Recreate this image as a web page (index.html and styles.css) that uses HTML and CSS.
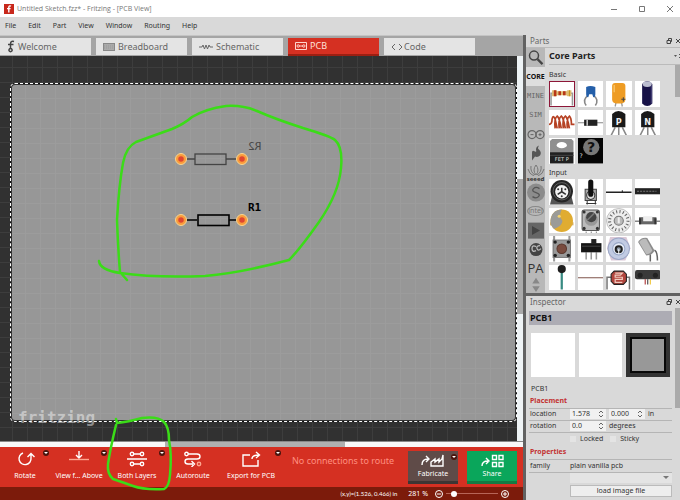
FILE: index.html
```html
<!DOCTYPE html>
<html lang="en">
<head>
    <meta charset="UTF-8">
    <meta name="viewport" content="width=device-width, initial-scale=1.0">
    <link rel="stylesheet" href="styles.css">
    <title>Untitled Sketch.fzz* - Fritzing - [PCB View]</title>
</head>
<body>
    <header class="titlebar">
        <svg class="logo" viewBox="0 0 10 10"><rect width="10" height="10" fill="#c8281c"/><path d="M7 2.2Q4.8 1.2 4.8 3.5V8.6M3 4.6H6.6" fill="none" stroke="#fff" stroke-width="1.4"/></svg>
        <span class="title">Untitled Sketch.fzz* - Fritzing - [PCB View]</span>
        <div class="window-buttons">
            <button aria-label="Minimize"><svg viewBox="0 0 8 8"><path d="M1 4.5H7"/></svg></button>
            <button aria-label="Maximize"><svg viewBox="0 0 8 8"><path d="M1.5 1.5H6.5V6.5H1.5Z"/></svg></button>
            <button aria-label="Close"><svg viewBox="0 0 8 8"><path d="M1 1L7 7M7 1L1 7"/></svg></button>
        </div>
    </header>

    <nav class="menu">
        <button>File</button>
        <button>Edit</button>
        <button>Part</button>
        <button>View</button>
        <button>Window</button>
        <button>Routing</button>
        <button>Help</button>
    </nav>

    <div class="workspace">
        <main class="editor">
            <div class="tabs">
                <button class="tab"><svg width="8" height="13" viewBox="0 0 8 13"><path d="M7 1.5Q3.5 .5 3.5 4V9M1 4.5H6.5M3.5 8.5A1.6 1.6 0 1 0 3.6 8.5" fill="none" stroke="#444" stroke-width="1.5"/></svg>Welcome</button>
                <button class="tab"><svg width="12" height="8" viewBox="0 0 12 8"><rect x=".5" y=".5" width="11" height="7" fill="#aaa" stroke="#888"/><path d="M1 3H11M1 5H11" stroke="#999" stroke-dasharray="1 1"/></svg>Breadboard</button>
                <button class="tab"><svg width="14" height="8" viewBox="0 0 14 8"><path d="M0 4H3L4 2L5.5 6L7 2L8.5 6L10 2L11 4H14" fill="none" stroke="#666"/></svg>Schematic</button>
                <button class="tab tab-on"><svg width="12" height="8" viewBox="0 0 12 8"><path d="M.5 .5H11.5V7.5H.5ZM4 4H8" fill="none" stroke="#ffd5cd"/><circle cx="3.2" cy="4" r="1.2" fill="none" stroke="#ffd5cd"/><circle cx="8.8" cy="4" r="1.2" fill="none" stroke="#ffd5cd"/></svg>PCB</button>
                <button class="tab tab-code"><svg width="12" height="8" viewBox="0 0 12 8"><path d="M4 1L1 4L4 7M8 1L11 4L8 7" fill="none" stroke="#666"/></svg>Code</button>
            </div>

            <div class="view">
                <div class="canvas">
                    <div class="board"></div>
                    <span class="watermark">fritzing</span>
                    <svg class="parts-layer" width="517" height="385" viewBox="0 56 517 385">
                        <g fill="none" stroke="#444" stroke-width="1.3">
                            <path d="M181 159H195M226 159H242"/><rect x="195" y="154" width="31" height="10.500"/>
                        </g>
                        <g fill="none" stroke="#000" stroke-width="1.6">
                            <path d="M181 220H197M229 220H242"/><rect x="198" y="215" width="31" height="10.500"/>
                        </g>
                        <g fill="#df4630" stroke="#fa9c3c" stroke-width="2.500">
                            <circle cx="181" cy="159" r="4"/><circle cx="242" cy="159" r="4"/>
                            <circle cx="181" cy="220" r="4"/><circle cx="242" cy="220" r="4"/>
                        </g>
                        <g fill="none" stroke="#ffd68a">
                            <circle cx="181" cy="159" r="5.500"/><circle cx="242" cy="159" r="5.500"/>
                            <circle cx="181" cy="220" r="5.500"/><circle cx="242" cy="220" r="5.500"/>
                        </g>
                        <path class="pen" d="M99 261Q100 270 120 273Q155 278 205 276Q240 273 289 260Q300 249 319 222Q339 193 341 168Q343 147 335 140Q330 136 303 128Q275 119 257 111Q243 105 226 106Q205 109 192 117Q184 124 172 129L136 142Q126 147 123 163Q119 185 117 220Q118 248 120 272L127 280"/>
                    </svg>
                    <span class="ref ref-bottom">R2</span>
                    <span class="ref ref-top">R1</span>
                </div>
                <div class="vscroll"><div class="vthumb"></div></div>
            </div>
            <div class="hscroll"><div class="hthumb"></div></div>

            <div class="toolbar">
                <button class="tool tool-rotate">
                    <svg viewBox="0 0 22 16"><path d="M9 2A6 6 0 1 0 17 7V3M13.500 6L17 2.500L20.500 6" /></svg>
                    Rotate<i class="drop"></i>
                </button>
                <button class="tool tool-wide">
                    <svg viewBox="0 0 22 16"><path d="M11 0V6M8 4L11 7L14 4"/><path d="M1 8.500H21" stroke="#ffa58e"/></svg>
                    View f... Above<i class="drop"></i>
                </button>
                <button class="tool tool-wide">
                    <svg viewBox="0 0 22 16"><path d="M1 8H21M7 3H15M7 13H15"/><circle cx="6" cy="3" r="1.700"/><circle cx="16" cy="3" r="1.700"/><circle cx="6" cy="13" r="1.700"/><circle cx="16" cy="13" r="1.700"/></svg>
                    Both Layers<i class="drop"></i>
                </button>
                <button class="tool tool-auto">
                    <svg viewBox="0 0 22 16"><circle cx="4.500" cy="3" r="1.700"/><path d="M6 3H15Q18 3 18 5.500T15 8H6Q3 8 3 10.500T6 13H11M9.500 10L12.500 13L9.500 16"/><circle cx="17" cy="13" r="1.700" stroke="#ffa58e"/></svg>
                    Autoroute
                </button>
                <button class="tool tool-export">
                    <svg viewBox="0 0 22 16"><path d="M10 4H3V15H18V9M12 8Q12 4 19 4M16 1L19.500 4L16 7"/></svg>
                    Export for PCB<i class="drop"></i>
                </button>
                <span class="routing">No connections to route</span>
                <button class="big fabricate">
                    <svg width="26" height="14" viewBox="0 0 26 14"><path d="M2 11Q2 5 8 5M6 2L9 5L6 8M11 12V8L15 5V8L19 5V8L22 5L23 1V12Z"/></svg>
                    Fabricate<i class="drop"></i>
                </button>
                <button class="big share">
                    <svg width="26" height="14" viewBox="0 0 26 14"><path d="M3 12Q3 7 9 7M7 4L10 7L7 10M13.500 1.500H17.500V5.500H13.500ZM20 1.500H24V5.500H20ZM13.500 8.500H17.500V12.500H13.500ZM20 8.500H24V12.500H20Z"/></svg>
                    Share
                </button>
            </div>
            <div class="status">
                <span class="coords">(x,y)=(1.526, 0.466) in</span>
                <span class="percent">281 %</span>
                <button aria-label="Zoom out"><svg viewBox="0 0 10 10"><circle cx="5" cy="5" r="3.500"/><path d="M3 5H7"/></svg></button>
                <input class="zoom" type="range" min="0" max="100" value="10" aria-label="Zoom">
                <button aria-label="Zoom in"><svg viewBox="0 0 10 10"><circle cx="5" cy="5" r="3.500"/><path d="M3 5H7M5 3V7"/></svg></button>
            </div>
            <svg class="pen-layer" width="80" height="90" viewBox="100 410 80 90"><path class="pen" d="M116 419L117 423Q128 422 142 418Q158 416 164 422Q169 427 169 440Q172 455 170 475Q169 487 164 489Q144 490 133 486Q125 483 113 479Q107 474 108 464Q110 450 116 425"/></svg>
        </main>

        <aside class="side">
            <section class="parts">
                <div class="dock-head"><span>Parts</span><svg viewBox="0 0 14 6"><path d="M1 2.500H4.500V5.500H1ZM2.500 2V.5H5.500V3.500H5M10 1L14 5M14 1L10 5"/></svg></div>
                <div class="parts-body">
                    <div class="bins">
                        <button class="bin" aria-label="Search"><svg viewBox="0 0 18 18"><circle cx="7" cy="7" r="4.500" fill="none" stroke="#444" stroke-width="1.500"/><path d="M10.500 10.500L15.500 15.500" stroke="#444" stroke-width="2.200"/></svg></button>
                        <button class="bin bin-on">CORE</button>
                        <button class="bin bin-mono">MINE</button>
                        <button class="bin bin-mono">SIM</button>
                        <button class="bin" aria-label="Arduino"><svg viewBox="0 0 18 18"><circle cx="5" cy="9" r="4" fill="none" stroke="#666" stroke-width="1.200"/><circle cx="13" cy="9" r="4" fill="none" stroke="#666" stroke-width="1.200"/><path d="M3.500 9H6.500M11.500 9H14.500M13 7.500V10.500" stroke="#666"/></svg></button>
                        <button class="bin" aria-label="SparkFun"><svg viewBox="0 0 18 18"><path d="M5 16V8Q5 5 8 7Q10 8 9 5Q9 2 12 1Q10 4 12 5Q15 8 13 11Q11 13 8 12Z" fill="#555"/></svg></button>
                        <button class="bin bin-seeed"><svg viewBox="0 0 18 12"><path d="M9 1Q5 6 9 11Q13 6 9 1M4 2Q3 8 8 11M14 2Q15 8 10 11M1 5Q2 10 7 12M17 5Q16 10 11 12" fill="none" stroke="#777"/></svg>seeed</button>
                        <button class="bin" aria-label="Snootlab"><svg viewBox="0 0 18 18"><circle cx="9" cy="9" r="9" fill="#8c8c8c"/><path d="M12.500 5Q9 2.500 6.500 5T9 9T11.500 13T5.500 13" fill="none" stroke="#555" stroke-width="1.300"/></svg></button>
                        <button class="bin bin-intel"><span>intel</span></button>
                        <button class="bin" aria-label="Play"><svg viewBox="0 0 18 18"><rect x="1" y="1" width="16" height="16" fill="#666"/><path d="M5 4.500L13 9L5 13.500Z" fill="#444"/></svg></button>
                        <button class="bin" aria-label="Monster"><svg viewBox="0 0 18 18"><circle cx="9" cy="9" r="6.500" fill="#444"/><path d="M9 6Q5 4 5 8T9 10M13 5Q9 5 10 8T14 8" stroke="#bbb" stroke-width="1.300" fill="none"/></svg></button>
                        <button class="bin bin-pa">PA</button>
                        <button class="bin" aria-label="Scroll bins"><svg viewBox="0 0 18 18"><path d="M5 8L9 2L13 8ZM5 11L9 17L13 11Z" fill="#888"/></svg></button>
                    </div>
                    <div class="bin-view">
                        <div class="bin-title"><h2>Core Parts</h2><svg viewBox="0 0 6 8"><path d="M0 3H3L1.500 5ZM5 2H6V3H5ZM5 5H6V6H5Z" fill="#555"/></svg></div>
                        <div class="bin-scroll">
                            <h3>Basic</h3>
                            <div class="grid grid-basic">
                                <button class="part part-on" aria-label="Resistor"><svg viewBox="0 0 25 25"><path d="M2 24V12H23V24" fill="none" stroke="#999" stroke-width="1.500"/><path d="M3 9H7L8 10H17L18 9H22V15H18L17 14H8L7 15H3Z" fill="#dfbd74"/><path d="M6 9V15M10.500 10V14" stroke="#b73518" stroke-width="2.500"/><path d="M15 10V14" stroke="#b73518" stroke-width="2.500"/><path d="M20 9V15" stroke="#c59119"/></svg></button>
                                <button class="part" aria-label="Ceramic Capacitor"><svg viewBox="0 0 25 25"><path d="M10 14Q4 18 8 24M15 14Q21 18 17 24" fill="none" stroke="#888" stroke-width="1.500"/><path d="M8 6Q12 4 17 6V13Q17 16 15 16L14 13H11L10 16Q8 16 8 13Z" fill="#245fa9"/></svg></button>
                                <button class="part" aria-label="Tantalum Capacitor"><svg viewBox="0 0 25 25"><path d="M10 20L9 25M15 20L16 25" stroke="#999" stroke-width="1.300"/><path d="M6 5Q6 2 9 2H16Q19 2 19 5V18Q19 22 15 22H10Q6 22 6 18Z" fill="#ee9c24"/><path d="M8 4V11" stroke="#ffd27e"/><path d="M15 18H19M17 16V20" stroke="#444"/></svg></button>
                                <button class="part" aria-label="Electrolytic Capacitor"><svg viewBox="0 0 25 25"><path d="M7 3Q12 -3 17 3V22Q12 27 7 22Z" fill="#171247"/><ellipse cx="12" cy="3" rx="4.500" ry="2.800" fill="#bbbdd0"/><path d="M16 5V22" stroke="#4b477d"/></svg></button>
                                <button class="part" aria-label="Inductor"><svg viewBox="0 0 25 25"><path d="M0 14Q3 14 3 9Q4 4 6 9L8 18M6 18Q5 8 8 6Q10 7 12 18M10 18Q9 8 12 6Q14 7 16 18M14 18Q13 8 16 6Q18 7 20 18M18 18Q17 8 20 6Q22 8 22 14H25" fill="none" stroke="#b64224" stroke-width="1.700"/></svg></button>
                                <button class="part" aria-label="Diode"><svg viewBox="0 0 25 25"><path d="M0 12.500H25" stroke="#888"/><rect x="6" y="9.500" width="13" height="6" fill="#222"/><path d="M9 9.500V15.500" stroke="#ccc" stroke-width="1.500"/></svg></button>
                                <button class="part" aria-label="PNP Transistor"><svg viewBox="0 0 25 25"><path d="M9 17L5 25M12.500 17V25M16 17L20 25" stroke="#888" stroke-width="1.500"/><path d="M6 4Q12 -2 19 4V17H6Z" fill="#191919"/><text x="12.500" y="15" class="letter">P</text></svg></button>
                                <button class="part" aria-label="NPN Transistor"><svg viewBox="0 0 25 25"><path d="M9 17L5 25M12.500 17V25M16 17L20 25" stroke="#888" stroke-width="1.500"/><path d="M6 4Q12 -2 19 4V17H6Z" fill="#191919"/><text x="12.500" y="15" class="letter">N</text></svg></button>
                                <button class="part" aria-label="FET"><svg viewBox="0 0 25 25"><path d="M1 3L3 1H22L24 3V15H1Z" fill="#8f8f8f"/><ellipse cx="12.500" cy="7" rx="5" ry="3" fill="#fff"/><path d="M1 14H24V25H1Z" fill="#202020"/><path d="M1 17H24" stroke="#444"/><text x="12.500" y="23" class="tiny">FET P</text></svg></button>
                                <button class="part" aria-label="Mystery Part"><svg viewBox="0 0 25 25"><path d="M0 0H25V25H0Z" fill="#050505"/><circle cx="13" cy="9" r="8" fill="#777"/><text x="13" y="14" class="mystery">?</text><text x="3" y="20" class="small-mark">?</text></svg></button>
                            </div>
                            <h3>Input</h3>
                            <div class="grid">
                                <button class="part" aria-label="Potentiometer"><svg viewBox="0 0 25 25"><path d="M3 17L1 25H24L22 17" fill="#555"/><circle cx="12.500" cy="12" r="11" fill="#252525"/><circle cx="12.500" cy="12" r="8.500" fill="none" stroke="#777" stroke-width=".7"/><circle cx="12.500" cy="12.500" r="6.500" fill="#f2f2f2"/><path d="M12.500 12.500V8.500M12.500 12.500L16.500 15M12.500 12.500L8.500 15" stroke="#333" stroke-width="1.500"/><circle cx="9" cy="10" r="1" fill="#333"/><circle cx="16" cy="10" r="1" fill="#333"/><circle cx="12.500" cy="17" r="1" fill="#333"/></svg></button>
                                <button class="part" aria-label="Toggle Switch"><svg viewBox="0 0 25 25"><path d="M7 10H18V21H7Z" fill="#aaa" stroke="#444"/><path d="M8 24H18M9 21V25M17 21V25" stroke="#333"/><circle cx="12.500" cy="16" r="4" fill="#ddd" stroke="#333"/><path d="M12.500 3V15" stroke="#111" stroke-width="5" stroke-linecap="round"/></svg></button>
                                <button class="part" aria-label="Flex Sensor"><svg viewBox="0 0 25 25"><path d="M0 13H25" stroke="#222" stroke-width="1.500"/><path d="M16 11V13" stroke="#222"/></svg></button>
                                <button class="part" aria-label="Slide Potentiometer"><svg viewBox="0 0 25 25"><path d="M0 9H25V15H0Z" fill="#222"/><path d="M2 12H21" stroke="#777" stroke-dasharray="2 1"/></svg></button>
                                <button class="part" aria-label="Piezo Element"><svg viewBox="0 0 25 25"><path d="M1 14H24V17H1Z" fill="#d4b06c"/><circle cx="12.500" cy="12.500" r="11" fill="#e0ac31"/><path d="M12.500 1.500A11 11 0 0 0 5 20.500Q14 17 13 12Q9 8 12.500 1.500" fill="#9b9b97"/><circle cx="10" cy="8" r="1.500" fill="#f7d56b"/></svg></button>
                                <button class="part" aria-label="Rotary Encoder"><svg viewBox="0 0 25 25"><rect x="4" y="2" width="17" height="20" rx="2" fill="#bbb" stroke="#555"/><g fill="#333"><circle cx="6" cy="4" r="1.500"/><circle cx="19" cy="4" r="1.500"/><circle cx="6" cy="20" r="1.500"/><circle cx="19" cy="20" r="1.500"/></g><circle cx="13" cy="11" r="6.500" fill="#999"/><circle cx="13" cy="9" r="5" fill="#444"/><path d="M9 12L16 5" stroke="#777" stroke-width="1.500"/><path d="M8 23V25M13 23V25M18 23V25" stroke="#888"/></svg></button>
                                <button class="part" aria-label="Code Switch"><svg viewBox="0 0 25 25"><circle cx="12.500" cy="12.500" r="12" fill="#eee" stroke="#aaa" stroke-width=".7"/><circle cx="12.500" cy="12.500" r="9" fill="none" stroke="#666" stroke-width="3" stroke-dasharray="1 2.300"/><circle cx="12.500" cy="12.500" r="4.500" fill="#bbb" stroke="#777"/><path d="M12.500 9V15" stroke="#eee" stroke-width="2"/></svg></button>
                                <button class="part" aria-label="Reed Switch"><svg viewBox="0 0 25 25"><path d="M0 13H4M21 13H25" stroke="#888" stroke-width="1.500"/><rect x="4" y="9" width="17" height="7" fill="#666"/><rect x="8" y="8" width="9" height="5" fill="#eee"/><path d="M5 10V16M20 10V16" stroke="#333" stroke-width="2"/></svg></button>
                                <button class="part" aria-label="Pushbutton"><svg viewBox="0 0 25 25"><path d="M5 0V25M20 0V25" stroke="#999" stroke-width="2"/><rect x="4" y="4" width="17" height="17" fill="#999" stroke="#777"/><g fill="#222"><circle cx="6" cy="6" r="1.700"/><circle cx="19" cy="6" r="1.700"/><circle cx="6" cy="19" r="1.700"/><circle cx="19" cy="19" r="1.700"/></g><circle cx="12.500" cy="12.500" r="4.700" fill="#794b3e" stroke="#5b392f"/></svg></button>
                                <button class="part" aria-label="Slide Switch"><svg viewBox="0 0 25 25"><path d="M8 16V23M13 16V23M18 16V23" stroke="#999" stroke-width="1.500"/><rect x="3" y="7" width="20" height="9" fill="#151515"/><rect x="13" y="3" width="5" height="5" fill="#222"/><path d="M4 10H22" stroke="#444"/></svg></button>
                                <button class="part" aria-label="Rotary Dial"><svg viewBox="0 0 25 25"><path d="M4 1H20L24 12L19 24H5L1 12Z" fill="#dcc9d7"/><circle cx="12.500" cy="12.500" r="10.500" fill="#c2cbe3" stroke="#9da8c7"/><circle cx="12.500" cy="12.500" r="6" fill="#e6ecf8" stroke="#97a6c5"/><circle cx="12.500" cy="13" r="3" fill="#8f9ba9" stroke="#222" stroke-width="2"/><path d="M12.500 13V18" stroke="#fff"/></svg></button>
                                <button class="part" aria-label="Tilt Switch"><svg viewBox="0 0 25 25"><path d="M15 18V25M19 14Q22 15 22 24" fill="none" stroke="#666" stroke-width="1.500"/><path d="M3 6Q6 1 12 2L19 14Q18 19 11 19Z" fill="#8c8c8c"/><path d="M4 6Q7 2 11 3L17 14Q15 18 11 18Z" fill="#bbb"/></svg></button>
                                <button class="part" aria-label="Microphone"><svg viewBox="0 0 25 25"><path d="M12.500 6V24" stroke="#388a82" stroke-width="2.200"/><circle cx="12.500" cy="4" r="4" fill="#1d1d1d"/></svg></button>
                                <button class="part" aria-label="Force Sensor"><svg viewBox="0 0 25 25"><path d="M0 12.500H25" stroke="#80564d"/></svg></button>
                                <button class="part" aria-label="LDR"><svg viewBox="0 0 25 25"><path d="M1 24V12H23V24" fill="none" stroke="#777" stroke-width="1.500"/><path d="M8 6H17L20 9V16L17 19H8L5 16V9Z" fill="#b1453d" stroke="#222"/><path d="M9 8H16L14 10H9V12H16V14H9V17H16" fill="none" stroke="#f1cbbf" stroke-width="1.200"/></svg></button>
                                <button class="part" aria-label="Distance Sensor"><svg viewBox="0 0 25 25"><rect x="0" y="5" width="25" height="9" rx="2" fill="#3a3a3a"/><circle cx="5" cy="10" r="2.500" fill="#222"/><circle cx="20" cy="10" r="2.500" fill="#222"/><path d="M10 14V19" stroke="#a22"/><path d="M12.500 14V19" stroke="#333"/><path d="M15 14V19" stroke="#eebf22"/></svg></button>
                            </div>
                        </div>
                    </div>
                </div>
            </section>

            <section class="inspector">
                <div class="dock-head"><span>Inspector</span><svg viewBox="0 0 14 6"><path d="M1 2.500H4.500V5.500H1ZM2.500 2V.5H5.500V3.500H5M10 1L14 5M14 1L10 5"/></svg></div>
                <div class="inspector-body">
                    <h2 class="part-name">PCB1</h2>
                    <div class="thumbs">
                        <div class="thumb"></div>
                        <div class="thumb"></div>
                        <div class="thumb thumb-pcb"><div class="thumb-board"></div></div>
                    </div>
                    <p class="part-label">PCB1</p>
                    <h3 class="group">Placement</h3>
                    <div class="row">
                        <label for="loc-x">location</label>
                        <span class="spin"><input id="loc-x" type="text" value="1.578"><svg viewBox="0 0 6 8"><path d="M1 3L3 1L5 3M1 5L3 7L5 5"/></svg></span>
                        <span class="spin"><input type="text" value="0.000" aria-label="location y"><svg viewBox="0 0 6 8"><path d="M1 3L3 1L5 3M1 5L3 7L5 5"/></svg></span>
                        <span>in</span>
                    </div>
                    <div class="row">
                        <label for="rot">rotation</label>
                        <span class="spin"><input id="rot" type="text" value="0.0"><svg viewBox="0 0 6 8"><path d="M1 3L3 1L5 3M1 5L3 7L5 5"/></svg></span>
                        <span>degrees</span>
                    </div>
                    <div class="checks">
                        <label><input type="checkbox">Locked</label>
                        <label><input type="checkbox">Sticky</label>
                    </div>
                    <h3 class="group">Properties</h3>
                    <div class="row row-family">
                        <span>family</span>
                        <span>plain vanilla pcb</span>
                    </div>
                    <div class="fields">
                        <div class="select-wrap"><select aria-label="image file"><option></option></select><i class="arrow"></i></div>
                        <button class="load">load image file</button>
                    </div>
                </div>
            </section>
        </aside>
    </div>
</body>
</html>
```

FILE: styles.css
```css
* {
    box-sizing: border-box;
}

body {
    margin: 0;
    height: 100vh;
    display: flex;
    flex-direction: column;
    overflow: hidden;
    background: #d9d9d9;
    color: #333;
    font: 8px/12px "Noto Sans", "Open Sans", sans-serif;
}

button, input, select {
    margin: 0;
    padding: 0;
    border: 0;
    background: none;
    color: inherit;
    font: inherit;
}

h2, h3, p {
    margin: 0;
}

/* title bar and menu */
.titlebar {
    display: flex;
    align-items: center;
    height: 17px;
    padding-left: 4px;
    gap: 3px;
    background: #fff;
}

.logo {
    width: 10px;
    height: 10px;
}

.title {
    flex: 1;
    color: #777;
    font-family: "Open Sans", sans-serif;
    font-size: 7px;
}

.window-buttons {
    display: flex;
    gap: 20px;
    padding-right: 6px;
}

.window-buttons button, .window-buttons svg {
    display: block;
    width: 8px;
    height: 8px;
    fill: none;
    stroke: #777;
}

.menu {
    display: flex;
    align-items: center;
    gap: 12px;
    height: 18px;
    padding-left: 5px;
    font-size: 7px;
}

.workspace {
    flex: 1;
    min-height: 0;
    display: flex;
}

/* editor */
.editor {
    position: relative;
    flex: 1;
    min-width: 0;
    display: flex;
    flex-direction: column;
    background: #d9d9d9;
}

.tabs {
    display: flex;
    gap: 5px;
    height: 21px;
    padding: 2px 0;
    border-top: 1px solid #c4c4c4;
    background: #a5a5a5;
}

.tab {
    display: flex;
    align-items: center;
    gap: 3px;
    width: 91px;
    height: 17px;
    padding-left: 7px;
    background: #e4e4e4;
    color: #666;
    font-size: 9px;
}

.tab-on {
    height: 18px;
    border-bottom: 2px solid #9c1f12;
    background: #d53022;
    color: #ffe0da;
}

.tab-code {
    gap: 1px;
}

.view {
    flex: 1;
    min-height: 0;
    display: flex;
}

.canvas {
    position: relative;
    flex: 1;
    overflow: hidden;
    background:
        repeating-linear-gradient(90deg, transparent 0 12px, #3d3d3d 12px 13px, transparent 13px 15px),
        repeating-linear-gradient(transparent 0 11px, #3d3d3d 11px 12px, transparent 12px 15px),
        #313131;
}

.board {
    position: absolute;
    top: 27px;
    right: 0;
    bottom: 19px;
    left: 10px;
    border: 1px dashed #fff;
    border-radius: 5px;
    box-shadow: inset 0 0 0 1px #333;
    background:
        repeating-linear-gradient(90deg, transparent 0 14px, #9c9c9c 14px 15px) padding-box,
        repeating-linear-gradient(transparent 0 14px, #9c9c9c 14px 15px) padding-box,
        linear-gradient(#979797, #979797) padding-box,
        linear-gradient(#111, #111) border-box;
}

.watermark {
    position: absolute;
    left: 18px;
    bottom: 13px;
    color: rgba(255, 255, 255, 0.45);
    font: bold 16px/20px "DejaVu Sans Mono", monospace;
}

.parts-layer {
    position: absolute;
    top: 0;
    left: 0;
}

.pen {
    fill: none;
    stroke: #3bdc18;
    stroke-width: 2.5px;
    stroke-linecap: round;
    stroke-linejoin: round;
}

.ref {
    position: absolute;
    left: 248px;
    color: #000;
    font: bold 11px/12px "DejaVu Sans Mono", monospace;
}

.ref-top {
    top: 146px;
}

/* silkscreen on the far side reads backwards */
.ref-bottom {
    top: 85px;
    color: #484848;
    font-weight: normal;
    transform: scaleX(-1);
}

.vscroll {
    width: 6px;
    background: #eef3f5;
}

.vthumb {
    height: 35%;
    margin-top: 123px;
    background: #aaa;
}

.hscroll {
    height: 6px;
    border-top: 1px solid #888;
    background: #f8f8f8;
}

.hthumb {
    width: 180px;
    height: 5px;
    margin-left: 165px;
    background: #b0b0b0;
}

/* toolbar */
.toolbar {
    display: flex;
    height: 40px;
    padding-right: 6px;
    background: #d53022;
    color: #fff;
}

.tool {
    position: relative;
    display: flex;
    flex-direction: column;
    align-items: center;
    width: 50px;
    padding-top: 4px;
    font-size: 7px;
    line-height: 12px;
    white-space: nowrap;
}

.tool svg {
    width: 22px;
    height: 16px;
    margin-bottom: 3px;
}

.tool svg, .big svg {
    fill: none;
    stroke: #fff;
    stroke-width: 1.4px;
}

.tool-wide {
    width: 58px;
}

.tool-auto {
    width: 54px;
}

.tool-export {
    width: 62px;
}

.drop {
    position: absolute;
    top: 3px;
    right: 1px;
    width: 6px;
    height: 6px;
    border-radius: 50%;
    background: #4a150e;
}

.drop::after {
    content: "";
    position: absolute;
    top: 2px;
    left: 1px;
    border: 2px solid transparent;
    border-top-color: #fff;
    border-bottom: 0;
}

.routing {
    flex: 1;
    padding-top: 8px;
    padding-left: 10px;
    color: #ff8f80;
    font-size: 9px;
    white-space: nowrap;
}

.big {
    position: relative;
    display: flex;
    flex-direction: column;
    align-items: center;
    width: 50px;
    height: 33px;
    margin-top: 4px;
    padding-top: 3px;
    font-size: 7px;
    line-height: 12px;
}

.fabricate {
    margin-right: 9px;
    border-bottom: 3px solid #3e3533;
    background: #5f4b48;
}

.share {
    border-bottom: 3px solid #147b43;
    background: #0aa65b;
}

.status {
    display: flex;
    align-items: center;
    justify-content: flex-end;
    height: 13px;
    padding-right: 13px;
    background: #7c1b0b;
    color: #fff;
}

.status button, .status svg {
    display: block;
    width: 10px;
    height: 10px;
    fill: none;
    stroke: #fff;
}

.coords {
    margin-right: 11px;
    font-family: Lato, sans-serif;
    font-size: 6px;
}

.percent {
    margin-right: 6px;
    font-size: 7px;
}

.zoom {
    width: 52px;
    height: 8px;
    margin: 0 2px;
    appearance: none;
    background: linear-gradient(#b76558, #b76558) center / 100% 1px no-repeat;
}

.zoom::-webkit-slider-thumb {
    appearance: none;
    width: 6px;
    height: 6px;
    border-radius: 50%;
    background: #fff;
}

.pen-layer {
    position: absolute;
    bottom: 0;
    left: 100px;
    pointer-events: none;
}

/* docked panels */
.side {
    width: 157px;
    display: flex;
    flex-direction: column;
    border-left: 3px solid #626262;
}

.parts {
    flex: 1;
    min-height: 0;
    display: flex;
    flex-direction: column;
}

.dock-head {
    display: flex;
    align-items: center;
    justify-content: space-between;
    height: 12px;
    padding-left: 4px;
    color: #666;
}

.dock-head svg {
    width: 14px;
    height: 6px;
    fill: none;
    stroke: #444;
}

.parts-body {
    flex: 1;
    min-height: 0;
    display: flex;
    border-top: 1px solid #bbb;
}

.bins {
    display: grid;
    grid-template-rows: repeat(11, 8fr) 7fr 7fr;
    width: 19px;
    background: #b8b8b8;
}

.bin {
    display: flex;
    flex-direction: column;
    align-items: center;
    justify-content: center;
    min-height: 0;
    color: #666;
    line-height: 8px;
}

.bin svg {
    width: 18px;
    height: 100%;
}

.bin-on {
    background: #dedede;
    color: #111;
    font-size: 7px;
    font-weight: bold;
}

.bin-mono {
    font: 7px/8px "DejaVu Sans Mono", monospace;
}

.bin-seeed {
    color: #333;
    font-size: 6px;
    font-weight: bold;
    line-height: 6px;
}

.bin-seeed svg {
    height: 12px;
}

.bin-intel span {
    border: 1px solid #888;
    border-radius: 50%;
    color: #777;
    font-size: 7px;
}

.bin-pa {
    color: #333;
    font: 13px/14px "Open Sans", sans-serif;
}

.bin-view {
    flex: 1;
    min-width: 0;
    display: flex;
    flex-direction: column;
    padding-left: 4px;
}

.bin-title {
    display: flex;
    align-items: center;
    justify-content: space-between;
    height: 17px;
    border-bottom: 1px solid #bbb;
}

.bin-title h2 {
    color: #222;
    font-size: 9px;
}

.bin-title svg {
    width: 6px;
    height: 8px;
}

.bin-scroll {
    flex: 1;
    min-height: 0;
    overflow: hidden;
    background: linear-gradient(#aaa, #aaa) right top / 5px 32px no-repeat;
}

.bin-scroll h3 {
    padding-top: 3px;
    font-size: 7px;
    font-weight: normal;
    line-height: 13px;
}

.grid {
    display: grid;
    grid-template-columns: repeat(4, 1fr);
    gap: 3px;
    width: 111px;
}

.grid-basic {
    height: 82px;
}

.part {
    display: block;
    aspect-ratio: 1;
    background: #fff;
}

.part svg {
    display: block;
    width: 100%;
    height: 100%;
}

.part-on {
    outline: 1px solid #8d1738;
    outline-offset: -1px;
}

.letter {
    fill: #eee;
    font: bold 8px "DejaVu Sans", sans-serif;
    text-anchor: middle;
}

.tiny {
    fill: #ddd;
    font: 5px "DejaVu Sans", sans-serif;
    text-anchor: middle;
}

.mystery {
    fill: #111;
    font: bold 14px "DejaVu Sans", sans-serif;
    text-anchor: middle;
}

.small-mark {
    fill: #ddd;
    font: 6px "DejaVu Sans", sans-serif;
    text-anchor: middle;
}

/* inspector */
.inspector {
    height: 207px;
    border-top: 3px solid #626262;
}

.inspector-body {
    padding: 3px 8px 3px 3px;
    background: linear-gradient(#aaa, #aaa) right top / 5px 100px no-repeat;
    font-size: 7px;
    line-height: 10px;
}

.part-name {
    padding-left: 1px;
    background: #adacb4;
    color: #111;
    font-size: 9px;
    line-height: 14px;
}

.thumbs {
    display: grid;
    grid-template-columns: repeat(3, 1fr);
    gap: 4px;
    padding: 8px 2px 7px;
}

.thumb {
    aspect-ratio: 1;
    background: #fff;
}

.thumb-pcb {
    padding: 4px;
    background: #333;
}

.thumb-board {
    height: 100%;
    border: 2px solid #080808;
    background: #989898;
}

.part-label {
    padding-left: 2px;
}

.group {
    padding-left: 1px;
    color: #c33232;
    font-size: 7px;
    line-height: 14px;
}

.row {
    display: flex;
    align-items: center;
    gap: 3px;
    height: 12px;
    padding-left: 1px;
    border-top: 1px solid #b5b5b5;
}

.row > :first-child {
    width: 37px;
}

.spin {
    display: flex;
    align-items: center;
    width: 36px;
    height: 10px;
    padding: 0 2px;
    background: #f1f1f1;
}

.spin input {
    flex: 1;
    min-width: 0;
    height: 10px;
}

.spin svg {
    width: 6px;
    height: 8px;
    fill: none;
    stroke: #666;
}

.checks {
    display: flex;
    gap: 7px;
    height: 13px;
    padding-left: 41px;
    border-top: 1px solid #b5b5b5;
}

.checks label {
    display: flex;
    align-items: center;
    gap: 4px;
}

.checks input {
    width: 6px;
    height: 6px;
    appearance: none;
    background: #e4e4e4;
}

.row-family {
    height: 13px;
}

.fields {
    display: flex;
    flex-direction: column;
    gap: 2px;
    padding-left: 41px;
    border-top: 1px solid #b5b5b5;
}

.select-wrap {
    position: relative;
    height: 10px;
}

.select-wrap select {
    display: block;
    width: 100%;
    height: 10px;
    appearance: none;
    background: #e4e4e4;
}

.arrow {
    position: absolute;
    top: 3px;
    right: 3px;
    border: 3px solid transparent;
    border-top-color: #777;
    border-bottom: 0;
}

.load {
    height: 12px;
    border: 1px solid #bbb;
    background: #eee;
}
```
